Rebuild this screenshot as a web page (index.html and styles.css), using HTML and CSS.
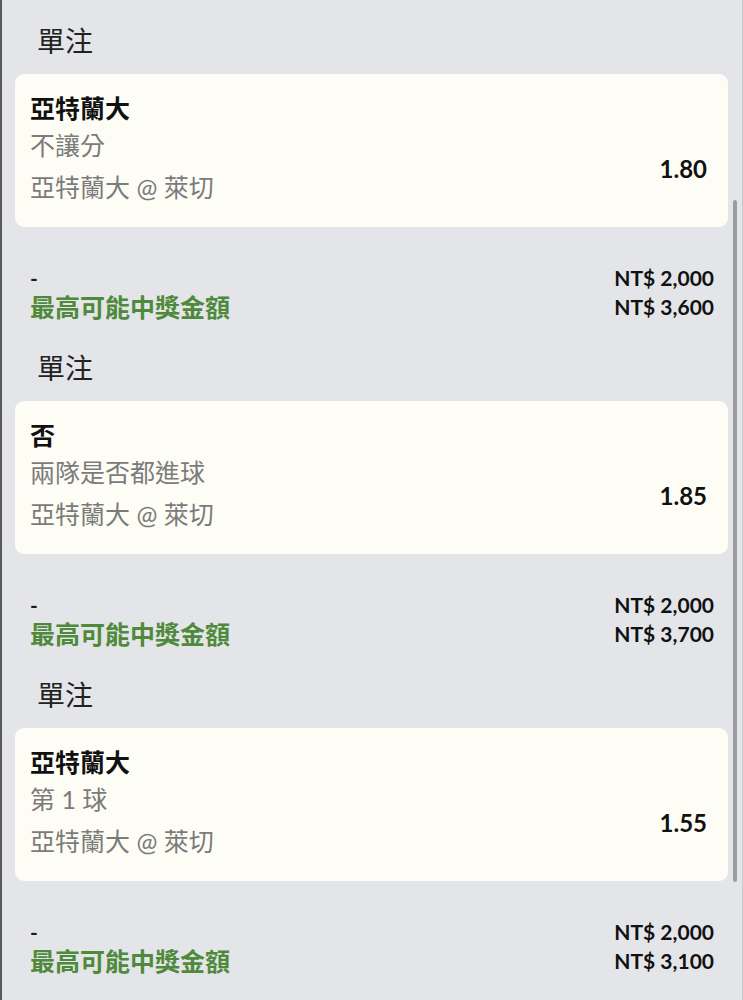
FILE: index.html
```html
<!DOCTYPE html>
<html lang="zh-TW">
<head>
    <meta charset="UTF-8">
    <meta name="viewport" content="width=device-width, initial-scale=1.0">
    <title>單注</title>
    <link rel="stylesheet" href="styles.css">
</head>
<body>
    <div class="slip">
        <div class="scroll-thumb"></div>

        <!-- Aposta 1 -->
        <div class="bet">
            <div class="bet-type">單注</div>
            <div class="bet-card">
                <div class="bet-info">
                    <div class="pick">亞特蘭大</div>
                    <div class="market">不讓分</div>
                    <div class="event">亞特蘭大 @ 萊切</div>
                </div>
                <div class="odds">1.80</div>
            </div>
            <div class="bet-summary">
                <div class="stake-label">-</div>
                <div class="amount">NT$ 2,000</div>
                <div class="win-label">最高可能中獎金額</div>
                <div class="amount">NT$ 3,600</div>
            </div>
        </div>

        <!-- Aposta 2 -->
        <div class="bet">
            <div class="bet-type">單注</div>
            <div class="bet-card">
                <div class="bet-info">
                    <div class="pick">否</div>
                    <div class="market">兩隊是否都進球</div>
                    <div class="event">亞特蘭大 @ 萊切</div>
                </div>
                <div class="odds">1.85</div>
            </div>
            <div class="bet-summary">
                <div class="stake-label">-</div>
                <div class="amount">NT$ 2,000</div>
                <div class="win-label">最高可能中獎金額</div>
                <div class="amount">NT$ 3,700</div>
            </div>
        </div>

        <!-- Aposta 3 -->
        <div class="bet">
            <div class="bet-type">單注</div>
            <div class="bet-card">
                <div class="bet-info">
                    <div class="pick">亞特蘭大</div>
                    <div class="market">第 1 球</div>
                    <div class="event">亞特蘭大 @ 萊切</div>
                </div>
                <div class="odds">1.55</div>
            </div>
            <div class="bet-summary">
                <div class="stake-label">-</div>
                <div class="amount">NT$ 2,000</div>
                <div class="win-label">最高可能中獎金額</div>
                <div class="amount">NT$ 3,100</div>
            </div>
        </div>
    </div>
</body>
</html>
```

FILE: styles.css
```css
/* Estilos Gerais */
body {
    margin: 0;
    padding: 0;
    background-color: #e4e5e8;
    font-family: Lato, "Noto Sans CJK TC", sans-serif;
    color: #1c1c1c;
}

.slip {
    position: relative;
    min-height: 1000px;
    box-sizing: border-box;
    padding: 20px 14px 0 15px;
    border-left: 2px solid #5a5a5c;
    border-right: 1px solid #c9cacd;
}

.scroll-thumb {
    position: absolute;
    top: 200px;
    right: 5px;
    width: 4px;
    height: 682px;
    border-radius: 2px;
    background-color: #9b9c9f;
}

.bet {
    margin-bottom: 26px;
}

.bet-type {
    font-family: "Noto Sans CJK TC", sans-serif;
    font-size: 28px;
    line-height: 40px;
    padding-left: 20px;
    color: #222;
}

.bet-card {
    display: flex;
    align-items: center;
    justify-content: space-between;
    margin-top: 14px;
    margin-left: -2px;
    padding: 14px 21px 20px 15px;
    background-color: #fdfdf6;
    border-radius: 9px;
    height: 153px;
    box-sizing: border-box;
}

.pick {
    font-family: "Noto Sans CJK TC", sans-serif;
    font-size: 25px;
    font-weight: 700;
    line-height: 38px;
    color: #111;
}

.market,
.event {
    font-family: Lato, "Noto Sans CJK TC", sans-serif;
    font-size: 25px;
    line-height: 38px;
    color: #7b7b7b;
}

.event {
    line-height: 42px;
    margin-top: 2px;
}

.odds {
    font-size: 24px;
    font-weight: 700;
    color: #111;
    margin-top: 42px;
}

.bet-summary {
    display: grid;
    grid-template-columns: 1fr auto;
    margin-top: 36px;
    padding: 0 14px 0 13px;
    line-height: 29px;
}

.stake-label {
    font-size: 21px;
    font-weight: 700;
}

.win-label {
    font-family: "Noto Sans CJK TC", sans-serif;
    font-size: 25px;
    font-weight: 700;
    color: #4f8a3c;
}

.amount {
    font-size: 21px;
    font-weight: 700;
    text-align: right;
    color: #111;
}
```
